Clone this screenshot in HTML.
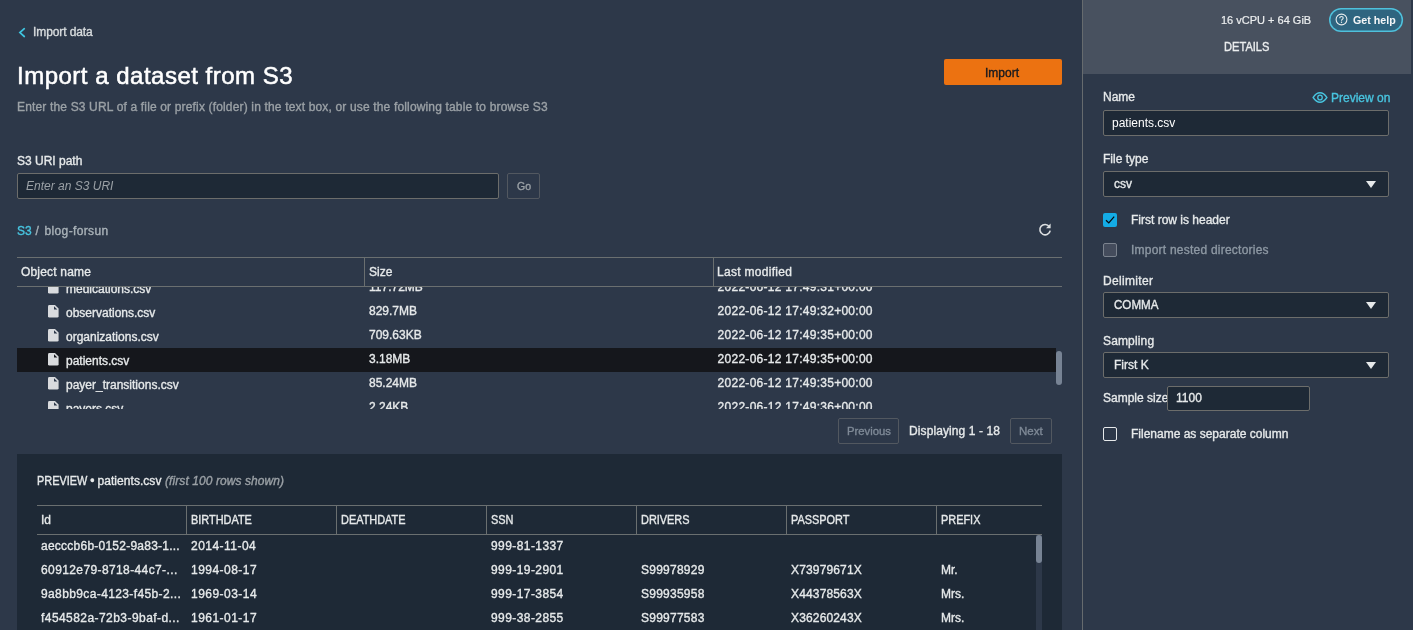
<!DOCTYPE html>
<html>
<head>
<meta charset="utf-8">
<title>Import a dataset from S3</title>
<style>
  html, body { margin: 0; padding: 0; }
  body {
    width: 1413px; height: 630px; overflow: hidden; position: relative;
    background: #2d3849;
    font-family: "Liberation Sans", sans-serif;
    font-size: 12px; color: #e6e9ea;
  }
  #wrap { position: absolute; left: 0; top: 0; width: 1413px; height: 630px; will-change: transform; }
  .t { position: absolute; white-space: nowrap; line-height: 16px; height: 16px; transform-origin: 0 50%; -webkit-text-stroke: 0.35px currentColor; }
  .ar { -webkit-text-stroke: 0 !important; }
  .up { transform: scaleX(0.91); }
  .b { position: absolute; box-sizing: border-box; }
  .w { color: #ffffff; }
  .g { color: #9ba1a6; }
  .teal { color: #48c4df; }
  .sb { font-weight: bold; }
  .row { position: absolute; left: 17px; width: 1039px; height: 24px; }
  .row .t { top: 3px; }
  .row .t.fn { top: 5px; }
  .row .t.dt { letter-spacing: 0.27px; }
  .fi { position: absolute; left: 31.3px; top: 5.3px; width: 10.6px; height: 12.6px; }
  .prow { position: absolute; left: 37px; width: 998px; height: 24px; }
  .prow .t { top: 4px; }
  .c1 { letter-spacing: 0.24px; } .c2 { letter-spacing: 0.47px; } .c4 { letter-spacing: 0.42px; } .c5 { letter-spacing: 0.25px; } .c6 { letter-spacing: 0.15px; }
  .inp { position: absolute; box-sizing: border-box; background: #1e2936; border: 1px solid #6c6d6b; border-radius: 2px; }
  .tri { position: absolute; width: 0; height: 0; border-left: 5px solid transparent; border-right: 5px solid transparent; border-top: 7px solid #e6e9ea; }
</style>
</head>
<body>
<div id="wrap">

<!-- ============ MAIN AREA ============ -->
<!-- back link -->
<svg class="b" style="left:17px;top:26px;width:10px;height:12px" viewBox="0 0 10 12"><path d="M7.3 2.7 L2.9 6.6 L7.3 10.5" fill="none" stroke="#3fc5e0" stroke-width="1.7" stroke-linecap="round" stroke-linejoin="miter"/></svg>
<div class="t" id="t_back" style="left:33px;top:24px;color:#d9dddf;letter-spacing:-0.1px;">Import data</div>

<!-- title -->
<div class="t w" id="t_title" style="left:17px;top:59px;font-size:24px;line-height:34px;height:34px;letter-spacing:0.5px;-webkit-text-stroke:0.55px #fff;">Import a dataset from S3</div>
<div class="t g" id="t_sub" style="left:17px;top:99px;letter-spacing:0.16px;">Enter the S3 URL of a file or prefix (folder) in the text box, or use the following table to browse S3</div>

<!-- URI -->
<div class="t" id="t_uri" style="left:17px;top:153px;">S3 URI path</div>
<div class="inp" style="left:17px;top:173px;width:482px;height:26px;"></div>
<div class="t g ar" id="t_ph" style="left:26px;top:178px;font-style:italic;">Enter an S3 URI</div>
<div class="b" style="left:507px;top:173px;width:33px;height:26px;border:1px solid #525860;border-radius:2px;"></div>
<div class="t g" id="t_go" style="left:517px;top:178px;font-size:10.5px;">Go</div>

<!-- breadcrumb -->
<div class="t teal" id="t_bc" style="left:17px;top:223px;">S3</div>
<div class="t" id="t_bc2" style="left:35.5px;top:223px;color:#aab3b9;">/</div>
<div class="t" id="t_bc3" style="left:44.5px;top:223px;color:#aab3b9;letter-spacing:0.36px;">blog-forsun</div>

<!-- refresh icon -->
<svg class="b" style="left:1037px;top:222.4px;width:16px;height:16px" viewBox="0 0 16 16">
  <path d="M12.3 4.6 A5.2 5.2 0 1 0 13.2 8.6" fill="none" stroke="#dcdfe1" stroke-width="1.6" stroke-linecap="butt"/>
  <path d="M13.6 1.6 L13.6 6.2 L9.0 6.2 Z" fill="#dcdfe1"/>
</svg>

<!-- S3 table header -->
<div class="b" style="left:17px;top:257px;width:1045px;height:1px;background:#6a6f70;"></div>
<div class="b" style="left:17px;top:286px;width:1045px;height:1px;background:#6a6f70;"></div>
<div class="b" style="left:364px;top:258px;width:1px;height:28px;background:#6a6f70;"></div>
<div class="b" style="left:713px;top:258px;width:1px;height:28px;background:#6a6f70;"></div>
<div class="t" id="t_h1" style="left:21px;top:264px;letter-spacing:0.18px;">Object name</div>
<div class="t" id="t_h2" style="left:369px;top:264px;">Size</div>
<div class="t" id="t_h3" style="left:717px;top:264px;letter-spacing:0.3px;">Last modified</div>

<!-- S3 table body (scroll clipped) -->
<div class="b" id="s3body" style="left:0;top:287px;width:1062px;height:122px;overflow:hidden;">
  <div class="row" style="top:-11px;">
    <svg class="fi" viewBox="0 0 10.6 12.6"><path d="M1.4 0 H7 L10.6 3.6 V11.2 Q10.6 12.6 9.2 12.6 H1.4 Q0 12.6 0 11.2 V1.4 Q0 0 1.4 0 Z" fill="#d9dbde"/><path d="M6 1.3 V4.5 H9.3 Z" fill="#2d3849"/></svg>
    <div class="t fn" style="left:49px;">medications.csv</div><div class="t" style="left:352px;">117.72MB</div><div class="t dt" style="left:700.6px;">2022-06-12 17:49:31+00:00</div>
  </div>
  <div class="row" style="top:13px;">
    <svg class="fi" viewBox="0 0 10.6 12.6"><path d="M1.4 0 H7 L10.6 3.6 V11.2 Q10.6 12.6 9.2 12.6 H1.4 Q0 12.6 0 11.2 V1.4 Q0 0 1.4 0 Z" fill="#d9dbde"/><path d="M6 1.3 V4.5 H9.3 Z" fill="#2d3849"/></svg>
    <div class="t fn" style="left:49px;">observations.csv</div><div class="t" style="left:352px;">829.7MB</div><div class="t dt" style="left:700.6px;">2022-06-12 17:49:32+00:00</div>
  </div>
  <div class="row" style="top:37px;">
    <svg class="fi" viewBox="0 0 10.6 12.6"><path d="M1.4 0 H7 L10.6 3.6 V11.2 Q10.6 12.6 9.2 12.6 H1.4 Q0 12.6 0 11.2 V1.4 Q0 0 1.4 0 Z" fill="#d9dbde"/><path d="M6 1.3 V4.5 H9.3 Z" fill="#2d3849"/></svg>
    <div class="t fn" style="left:49px;">organizations.csv</div><div class="t" style="left:352px;">709.63KB</div><div class="t dt" style="left:700.6px;">2022-06-12 17:49:35+00:00</div>
  </div>
  <div class="row" style="top:61px;background:#15171c;">
    <svg class="fi" viewBox="0 0 10.6 12.6"><path d="M1.4 0 H7 L10.6 3.6 V11.2 Q10.6 12.6 9.2 12.6 H1.4 Q0 12.6 0 11.2 V1.4 Q0 0 1.4 0 Z" fill="#d9dbde"/><path d="M6 1.3 V4.5 H9.3 Z" fill="#15171c"/></svg>
    <div class="t fn" style="left:49px;">patients.csv</div><div class="t" style="left:352px;">3.18MB</div><div class="t dt" style="left:700.6px;">2022-06-12 17:49:35+00:00</div>
  </div>
  <div class="row" style="top:85px;">
    <svg class="fi" viewBox="0 0 10.6 12.6"><path d="M1.4 0 H7 L10.6 3.6 V11.2 Q10.6 12.6 9.2 12.6 H1.4 Q0 12.6 0 11.2 V1.4 Q0 0 1.4 0 Z" fill="#d9dbde"/><path d="M6 1.3 V4.5 H9.3 Z" fill="#2d3849"/></svg>
    <div class="t fn" style="left:49px;">payer_transitions.csv</div><div class="t" style="left:352px;">85.24MB</div><div class="t dt" style="left:700.6px;">2022-06-12 17:49:35+00:00</div>
  </div>
  <div class="row" style="top:109px;">
    <svg class="fi" viewBox="0 0 10.6 12.6"><path d="M1.4 0 H7 L10.6 3.6 V11.2 Q10.6 12.6 9.2 12.6 H1.4 Q0 12.6 0 11.2 V1.4 Q0 0 1.4 0 Z" fill="#d9dbde"/><path d="M6 1.3 V4.5 H9.3 Z" fill="#2d3849"/></svg>
    <div class="t fn" style="left:49px;">payers.csv</div><div class="t" style="left:352px;">2.24KB</div><div class="t dt" style="left:700.6px;">2022-06-12 17:49:36+00:00</div>
  </div>
  <!-- scrollbar thumb -->
  <div class="b" style="left:1056px;top:64px;width:6px;height:34px;background:#778394;border-radius:3px;"></div>
</div>

<!-- pagination -->
<div class="b" style="left:838px;top:418px;width:61px;height:26px;border:1px solid #525860;border-radius:2px;"></div>
<div class="t" id="t_prev" style="left:847px;top:423px;color:#7f8a97;font-size:11.3px;">Previous</div>
<div class="t" id="t_disp" style="left:909px;top:423px;letter-spacing:0.1px;">Displaying 1 - 18</div>
<div class="b" style="left:1010px;top:418px;width:42px;height:26px;border:1px solid #525860;border-radius:2px;"></div>
<div class="t" id="t_next" style="left:1019px;top:423px;color:#7f8a97;font-size:11.5px;">Next</div>

<!-- Import button -->
<div class="b" style="left:944px;top:59px;width:118px;height:26px;background:#ec7211;border-radius:2px;"></div>
<div class="t" id="t_imp" style="left:985px;top:65px;color:#16191f;">Import</div>

<!-- ============ PREVIEW PANEL ============ -->
<div class="b" style="left:17px;top:454px;width:1045px;height:176px;background:#1e2936;"></div>
<div class="t up" id="t_pv" style="left:37px;top:473px;">PREVIEW</div>
<div class="t" id="t_pv2" style="left:90.3px;top:473px;">&bull;</div>
<div class="t" id="t_pv3" style="left:97.5px;top:473px;letter-spacing:0.05px;">patients.csv</div>
<div class="t g" id="t_pv4" style="left:165px;top:473px;font-style:italic;letter-spacing:0.08px;">(first 100 rows shown)</div>
<div class="b" style="left:37px;top:505px;width:1005px;height:1px;background:#6a6f70;"></div>
<div class="b" style="left:37px;top:534px;width:1005px;height:1px;background:#6a6f70;"></div>
<div class="b" style="left:186px;top:506px;width:1px;height:28px;background:#6a6f70;"></div>
<div class="b" style="left:336px;top:506px;width:1px;height:28px;background:#6a6f70;"></div>
<div class="b" style="left:486px;top:506px;width:1px;height:28px;background:#6a6f70;"></div>
<div class="b" style="left:636px;top:506px;width:1px;height:28px;background:#6a6f70;"></div>
<div class="b" style="left:786px;top:506px;width:1px;height:28px;background:#6a6f70;"></div>
<div class="b" style="left:936px;top:506px;width:1px;height:28px;background:#6a6f70;"></div>
<div class="t" style="left:41px;top:512px;">Id</div>
<div class="t up" style="left:191px;top:512px;">BIRTHDATE</div>
<div class="t up" style="left:341px;top:512px;">DEATHDATE</div>
<div class="t up" style="left:491px;top:512px;">SSN</div>
<div class="t up" style="left:641px;top:512px;">DRIVERS</div>
<div class="t up" style="left:791px;top:512px;">PASSPORT</div>
<div class="t up" style="left:941px;top:512px;">PREFIX</div>

<div class="prow" style="top:534px;">
  <div class="t c1" style="left:4px;">aecccb6b-0152-9a83-1...</div><div class="t c2" style="left:154px;">2014-11-04</div><div class="t c4" style="left:454px;">999-81-1337</div>
</div>
<div class="prow" style="top:558px;">
  <div class="t c1" style="left:4px;letter-spacing:0.39px;">60912e79-8718-44c7-...</div><div class="t c2" style="left:154px;">1994-08-17</div><div class="t c4" style="left:454px;">999-19-2901</div><div class="t c5" style="left:604px;">S99978929</div><div class="t c6" style="left:754px;">X73979671X</div><div class="t c7" style="left:904px;">Mr.</div>
</div>
<div class="prow" style="top:582px;">
  <div class="t c1" style="left:4px;letter-spacing:0.38px;">9a8bb9ca-4123-f45b-2...</div><div class="t c2" style="left:154px;">1969-03-14</div><div class="t c4" style="left:454px;">999-17-3854</div><div class="t c5" style="left:604px;">S99935958</div><div class="t c6" style="left:754px;">X44378563X</div><div class="t c7" style="left:904px;">Mrs.</div>
</div>
<div class="prow" style="top:606px;">
  <div class="t c1" style="left:4px;letter-spacing:0.44px;">f454582a-72b3-9baf-d...</div><div class="t c2" style="left:154px;">1961-01-17</div><div class="t c4" style="left:454px;">999-38-2855</div><div class="t c5" style="left:604px;">S99977583</div><div class="t c6" style="left:754px;">X36260243X</div><div class="t c7" style="left:904px;">Mrs.</div>
</div>
<div class="b" style="left:1036px;top:535px;width:6px;height:95px;background:#2d3849;"></div>
<div class="b" style="left:1036px;top:535px;width:6px;height:28px;background:#778394;border-radius:3px;"></div>

<!-- ============ RIGHT PANEL ============ -->
<div class="b" style="left:1083px;top:0;width:328px;height:74px;background:#48515f;"></div>
<div class="b" style="left:1082px;top:0;width:1px;height:630px;background:#666b6e;"></div>

<div class="t ar" id="t_cpu" style="left:1221px;top:12px;font-size:11px;color:#eceeef;-webkit-text-stroke:0.2px #eceeef !important;">16 vCPU + 64 GiB</div>
<svg class="b" style="left:1328px;top:7px;width:76px;height:26px" viewBox="0 0 76 26"><rect x="1.75" y="1.65" width="72.6" height="22.6" rx="11.3" ry="11.3" fill="#2f6580" stroke="#4fc1dc" stroke-width="1.5"/></svg>
<svg class="b" style="left:1335.2px;top:13px;width:13px;height:13px" viewBox="0 0 13 13">
  <circle cx="6.5" cy="6.5" r="5.4" fill="none" stroke="#e8ecee" stroke-width="1.1"/>
  <path d="M4.8 5.2 Q4.8 3.5 6.5 3.5 Q8.2 3.5 8.2 5.0 Q8.2 5.9 7.2 6.4 Q6.5 6.8 6.5 7.7" fill="none" stroke="#e8ecee" stroke-width="1.1"/>
  <circle cx="6.5" cy="9.3" r="0.7" fill="#f0f3f4"/>
</svg>
<div class="t sb" id="t_help" style="left:1353px;top:12px;font-size:11.5px;transform:scaleX(0.93);-webkit-text-stroke:0;color:#f4f6f7;">Get help</div>
<div class="t" id="t_det" style="left:1224px;top:39px;color:#eceeef;transform:scaleX(0.925);">DETAILS</div>

<div class="t" id="t_name" style="left:1103px;top:89px;">Name</div>
<svg class="b" style="left:1312px;top:91px;width:16px;height:13px" preserveAspectRatio="none" viewBox="0 0 17 13">
  <path d="M1.2 6.5 Q4.5 1.8 8.5 1.8 Q12.5 1.8 15.8 6.5 Q12.5 11.2 8.5 11.2 Q4.5 11.2 1.2 6.5 Z" fill="none" stroke="#48c4df" stroke-width="1.4"/>
  <circle cx="8.5" cy="6.5" r="2.4" fill="none" stroke="#48c4df" stroke-width="1.4"/>
</svg>
<div class="t teal" id="t_pon" style="left:1331px;top:90px;">Preview on</div>
<div class="inp" style="left:1103px;top:110px;width:286px;height:26px;"></div>
<div class="t w ar" id="t_nv" style="left:1112px;top:115px;">patients.csv</div>

<div class="t" id="t_ft" style="left:1103px;top:151px;">File type</div>
<div class="inp" style="left:1103px;top:171px;width:286px;height:26px;"></div>
<div class="t" id="t_csv" style="left:1114px;top:176px;">csv</div>
<div class="tri" style="left:1366px;top:181px;"></div>

<div class="b" style="left:1103px;top:213px;width:14px;height:14px;background:#14ace6;border-radius:2px;"></div>
<svg class="b" style="left:1103px;top:213px;width:14px;height:14px" viewBox="0 0 14 14"><path d="M3.0 7.2 L5.8 9.9 L11.2 3.6" fill="none" stroke="#05090d" stroke-width="1.25"/></svg>
<div class="t" id="t_c1" style="left:1131px;top:212px;">First row is header</div>

<div class="b" style="left:1103px;top:243px;width:14px;height:14px;background:#444c5c;border:1px solid #7b838e;border-radius:2px;"></div>
<div class="t" id="t_c2" style="left:1131px;top:242px;color:#8e99a4;letter-spacing:0.23px;">Import nested directories</div>

<div class="t" id="t_dl" style="left:1103px;top:273px;letter-spacing:0.33px;">Delimiter</div>
<div class="inp" style="left:1103px;top:292px;width:286px;height:26px;"></div>
<div class="t" id="t_comma" style="left:1114px;top:297px;transform:scaleX(0.966);">COMMA</div>
<div class="tri" style="left:1366px;top:302px;"></div>

<div class="t" id="t_sm" style="left:1103px;top:333px;letter-spacing:0.15px;">Sampling</div>
<div class="inp" style="left:1103px;top:352px;width:286px;height:26px;"></div>
<div class="t" id="t_fk" style="left:1114px;top:357px;">First K</div>
<div class="tri" style="left:1366px;top:362px;"></div>

<div class="t" id="t_ss" style="left:1103px;top:390px;">Sample size</div>
<div class="inp" style="left:1167px;top:386px;width:143px;height:25px;"></div>
<div class="t" id="t_1100" style="left:1176px;top:390px;">1100</div>

<div class="b" style="left:1103px;top:427px;width:14px;height:14px;border:1px solid #e6e9ea;border-radius:2px;"></div>
<div class="t" id="t_c3" style="left:1131px;top:426px;">Filename as separate column</div>

</div>
</body>
</html>
